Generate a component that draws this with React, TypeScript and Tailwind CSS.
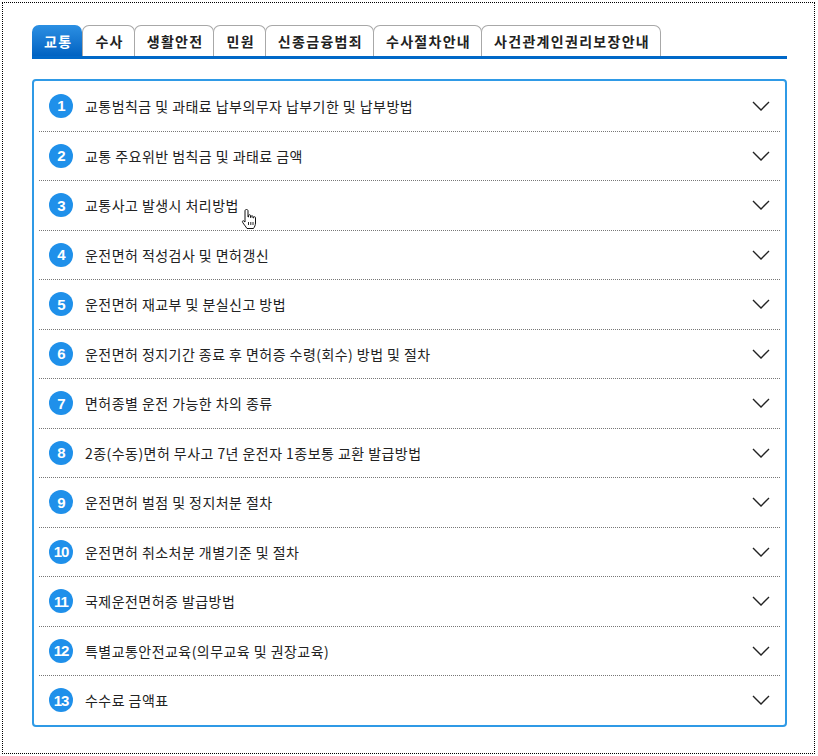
import React from "react";

const tabs = ["교통", "수사", "생활안전", "민원", "신종금융범죄", "수사절차안내", "사건관계인권리보장안내"];

const items = [
  "교통범칙금 및 과태료 납부의무자 납부기한 및 납부방법",
  "교통 주요위반 범칙금 및 과태료 금액",
  "교통사고 발생시 처리방법",
  "운전면허 적성검사 및 면허갱신",
  "운전면허 재교부 및 분실신고 방법",
  "운전면허 정지기간 종료 후 면허증 수령(회수) 방법 및 절차",
  "면허종별 운전 가능한 차의 종류",
  "2종(수동)면허 무사고 7년 운전자 1종보통 교환 발급방법",
  "운전면허 벌점 및 정지처분 절차",
  "운전면허 취소처분 개별기준 및 절차",
  "국제운전면허증 발급방법",
  "특별교통안전교육(의무교육 및 권장교육)",
  "수수료 금액표",
];

const font = { fontFamily: '"Noto Sans CJK KR", "Noto Sans", sans-serif' };

function Chevron() {
  return (
    <svg width="18" height="10" viewBox="0 0 18 10" className="shrink-0">
      <path d="M1 1 L9 9 L17 1" fill="none" stroke="#222" strokeWidth="1.4" />
    </svg>
  );
}

function Hand() {
  return (
    <svg width="18" height="22" viewBox="0 0 18 22" className="absolute left-[238px] top-[205px]">
      <path
        d="M5.5 1.5 C6.5 1.5 7 2 7 3 L7 9 L7.5 9 L7.5 7.5 C7.5 6.5 9.5 6.5 9.5 7.5 L9.5 9.5 L10 9.5 L10 8.5 C10 7.5 12 7.5 12 8.5 L12 10 L12.5 10 L12.5 9.5 C12.5 8.5 14.5 8.5 14.5 9.5 L14.5 15 C14.5 17 13.5 19 12.5 20.5 L6 20.5 C5 19 3.5 17 2 15 C1 13.5 1.5 12.5 2.5 12.8 L4 14 L4 3 C4 2 4.5 1.5 5.5 1.5 Z"
        fill="#fff"
        stroke="#111"
        strokeWidth="1"
        strokeLinejoin="round"
      />
      <path d="M7.5 14 L7.5 17 M9.8 14 L9.8 17 M12 14 L12 17" stroke="#111" strokeWidth="0.9" />
    </svg>
  );
}

export default function App() {
  return (
    <div className="pt-[2px] pl-[2px] bg-white" style={font}>
      <div className="relative w-[813px] h-[752px] border border-dotted border-black pt-[22px] pl-[29px]">
        <div className="w-[755px]">
          <div className="flex items-end h-[31px] border-b-[3px] border-[#0068c8] box-content">
            {tabs.map((t, i) =>
              i === 0 ? (
                <div
                  key={t}
                  className="h-[31px] pl-[12px] pr-[10px] flex items-center rounded-t-[7px] bg-gradient-to-b from-[#2b90e3] to-[#0062c2] text-white font-bold text-[14px] tracking-[1.3px] leading-none"
                >
                  {t}
                </div>
              ) : (
                <div
                  key={t}
                  className={`h-[31px] pl-[12px] pr-[10px] flex items-center rounded-t-[7px] border border-b-0 border-[#a8a8a8] bg-white text-[#222] font-bold text-[14px] tracking-[1.3px] leading-none ${i > 1 ? "-ml-px" : ""}`}
                >
                  {t}
                </div>
              )
            )}
          </div>
          <div className="mt-[20px] border-2 border-[#2f9ae6] rounded-[4px] px-[5px]">
            {items.map((t, i) => (
              <div
                key={i}
                className={`flex items-center h-[49.5px] pl-[10px] pr-[10px] ${i > 0 ? "border-t border-dotted border-[#777]" : ""}`}
              >
                <div className="w-[24px] h-[24px] rounded-full bg-[#1f90ea] text-white flex items-center justify-center font-bold text-[15px] tracking-[-1px] leading-none shrink-0" style={{ fontFamily: '"Liberation Sans", Arial, sans-serif' }}>
                  {i + 1}
                </div>
                <div className="ml-[12px] flex-1 text-[14px] text-[#222] tracking-[0.45px] leading-none">{t}</div>
                <Chevron />
              </div>
            ))}
          </div>
        </div>
        <Hand />
      </div>
    </div>
  );
}
